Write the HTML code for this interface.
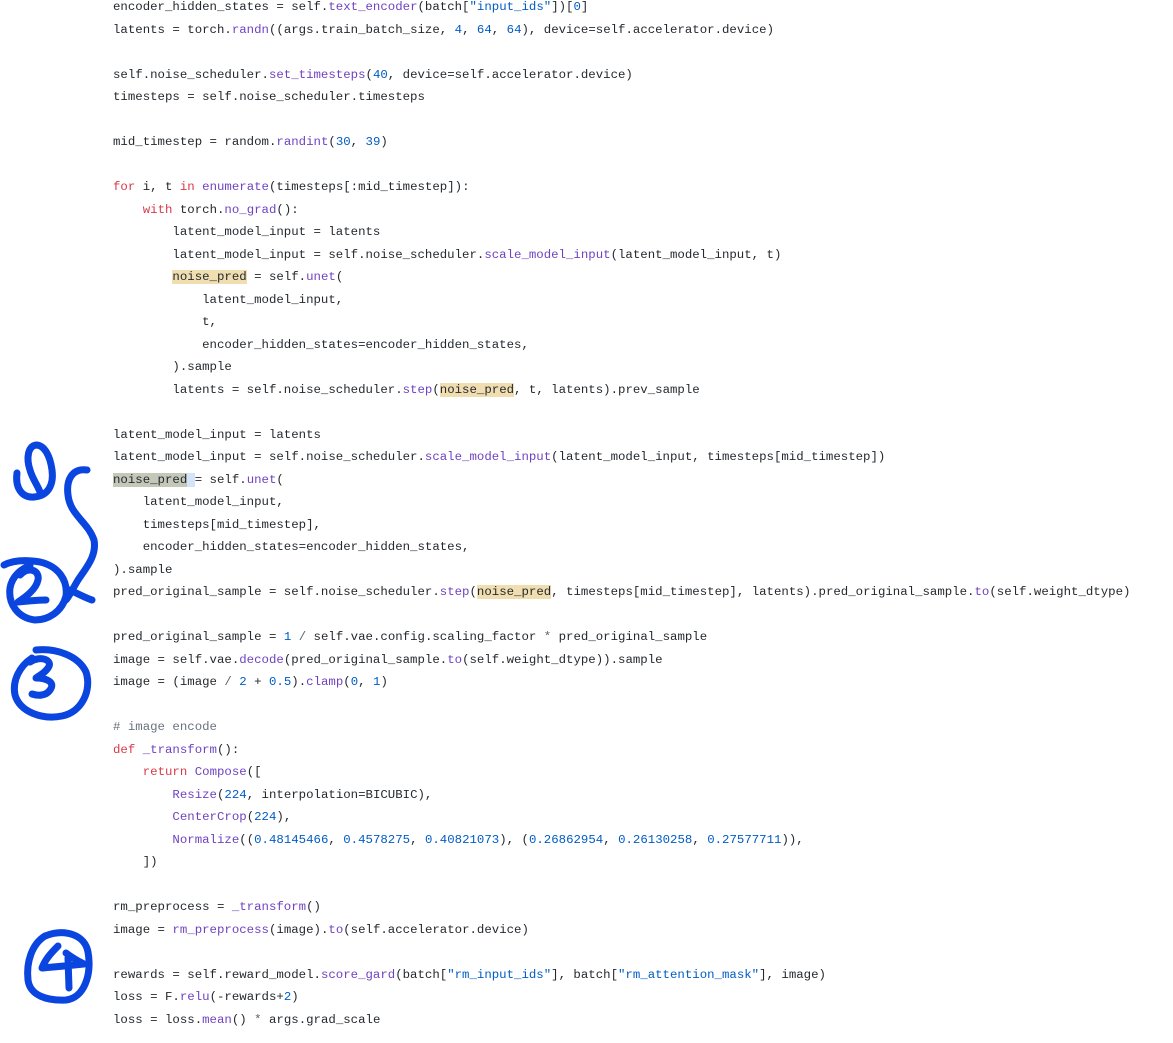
<!DOCTYPE html>
<html><head><meta charset="utf-8"><style>
html,body{margin:0;padding:0;background:#fff;width:1173px;height:1043px;overflow:hidden}
pre{position:absolute;left:113px;top:-3.8px;margin:0;font-family:"Liberation Mono",monospace;font-size:12.38px;line-height:22.5px;color:#24292e}
.k{color:#d73a49}.f{color:#6f42c1}.n{color:#005cc5}.c{color:#6a737d}.o{color:#5a6470}
.h{background:#f1deb0}.g{background:#c4c8b8;box-shadow:8px 0 0 #d3e3fa}
svg{position:absolute;left:0;top:0}
</style></head><body>
<pre>encoder_hidden_states = self.<span class="f">text_encoder</span>(batch[<span class="n">"input_ids"</span>])[<span class="n">0</span>]
latents = torch.<span class="f">randn</span>((args.train_batch_size, <span class="n">4</span>, <span class="n">64</span>, <span class="n">64</span>), device=self.accelerator.device)

self.noise_scheduler.<span class="f">set_timesteps</span>(<span class="n">40</span>, device=self.accelerator.device)
timesteps = self.noise_scheduler.timesteps

mid_timestep = random.<span class="f">randint</span>(<span class="n">30</span>, <span class="n">39</span>)

<span class="k">for</span> i, t <span class="k">in</span> <span class="f">enumerate</span>(timesteps[:mid_timestep]):
    <span class="k">with</span> torch.<span class="f">no_grad</span>():
        latent_model_input = latents
        latent_model_input = self.noise_scheduler.<span class="f">scale_model_input</span>(latent_model_input, t)
        <span class="h">noise_pred</span> = self.<span class="f">unet</span>(
            latent_model_input,
            t,
            encoder_hidden_states=encoder_hidden_states,
        ).sample
        latents = self.noise_scheduler.<span class="f">step</span>(<span class="h">noise_pred</span>, t, latents).prev_sample

latent_model_input = latents
latent_model_input = self.noise_scheduler.<span class="f">scale_model_input</span>(latent_model_input, timesteps[mid_timestep])
<span class="g">noise_pred</span> = self.<span class="f">unet</span>(
    latent_model_input,
    timesteps[mid_timestep],
    encoder_hidden_states=encoder_hidden_states,
).sample
pred_original_sample = self.noise_scheduler.<span class="f">step</span>(<span class="h">noise_pred</span>, timesteps[mid_timestep], latents).pred_original_sample.<span class="f">to</span>(self.weight_dtype)

pred_original_sample = <span class="n">1</span> <span class="o">/</span> self.vae.config.scaling_factor <span class="o">*</span> pred_original_sample
image = self.vae.<span class="f">decode</span>(pred_original_sample.<span class="f">to</span>(self.weight_dtype)).sample
image = (image <span class="o">/</span> <span class="n">2</span> + <span class="n">0.5</span>).<span class="f">clamp</span>(<span class="n">0</span>, <span class="n">1</span>)

<span class="c"># image encode</span>
<span class="k">def</span> <span class="f">_transform</span>():
    <span class="k">return</span> <span class="f">Compose</span>([
        <span class="f">Resize</span>(<span class="n">224</span>, interpolation=BICUBIC),
        <span class="f">CenterCrop</span>(<span class="n">224</span>),
        <span class="f">Normalize</span>((<span class="n">0.48145466</span>, <span class="n">0.4578275</span>, <span class="n">0.40821073</span>), (<span class="n">0.26862954</span>, <span class="n">0.26130258</span>, <span class="n">0.27577711</span>)),
    ])

rm_preprocess = <span class="f">_transform</span>()
image = <span class="f">rm_preprocess</span>(image).<span class="f">to</span>(self.accelerator.device)

rewards = self.reward_model.<span class="f">score_gard</span>(batch[<span class="n">"rm_input_ids"</span>], batch[<span class="n">"rm_attention_mask"</span>], image)
loss = F.<span class="f">relu</span>(-rewards+<span class="n">2</span>)
loss = loss.<span class="f">mean</span>() <span class="o">*</span> args.grad_scale
</pre>
<svg width="1173" height="1043" fill="none" stroke="#0a45e0" stroke-width="7" stroke-linecap="round" stroke-linejoin="round">
<path d="M17,473 C15,488 22,498 34,497 C48,496 54,485 52,470 C50,455 44,445 36,445 C28,446 26,458 30,470 C32,478 38,486 40,492"/>
<path d="M87,470 C72,468 66,480 68,495 C70,515 88,522 94,540 C97,556 86,568 78,580 C72,590 70,595 66,600 M70,590 C78,594 86,598 92,600"/>
<path d="M4,565 C14,560 28,560 40,562 C58,566 68,580 66,596 C62,612 48,620 35,620 C18,618 8,604 10,588 C12,576 22,568 30,566"/>
<path d="M20,575 C28,566 40,570 38,580 C36,590 24,598 18,602 C28,601 38,600 46,600"/>
<path d="M36,650 C55,648 78,655 86,672 C92,690 82,712 62,716 C42,720 20,712 15,695 C12,680 20,666 32,658"/>
<path d="M30,662 C40,655 54,660 48,668 C44,674 38,676 36,678 C46,678 56,682 50,690 C46,696 38,696 32,694"/>
<path d="M45,936 C65,928 85,935 88,952 C92,975 84,998 66,1000 C48,1001 30,996 28,980 C26,962 32,944 45,936"/>
<path d="M58,946 C50,954 45,960 42,968 C52,967 65,966 84,964 C76,960 70,956 66,953 M68,958 L69,988"/>
</svg>
</body></html>
